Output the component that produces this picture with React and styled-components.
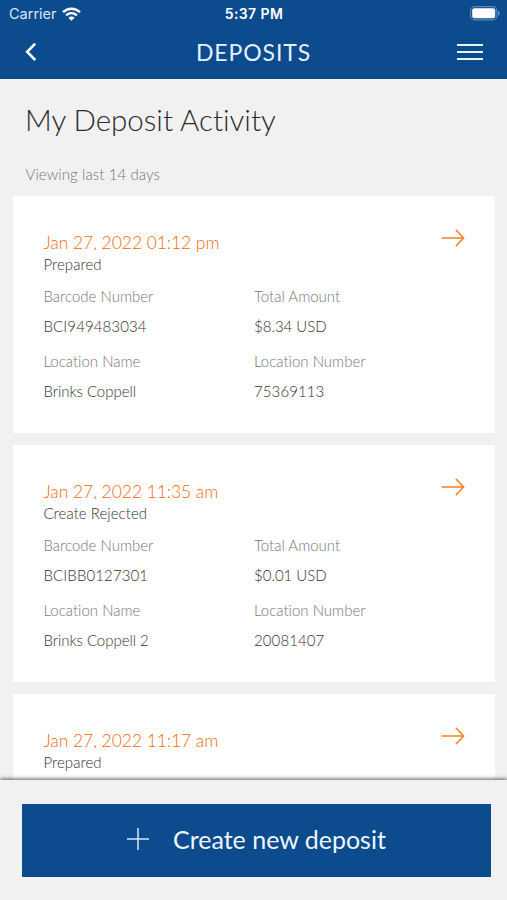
import React from "react";
import styled, { createGlobalStyle } from "styled-components";

const deposits = [
  {
    id: 1,
    date: "Jan 27, 2022 01:12 pm",
    status: "Prepared",
    barcode: "BCI949483034",
    amount: "$8.34 USD",
    location: "Brinks Coppell",
    locationNumber: "75369113",
  },
  {
    id: 2,
    date: "Jan 27, 2022 11:35 am",
    status: "Create Rejected",
    barcode: "BCIBB0127301",
    amount: "$0.01 USD",
    location: "Brinks Coppell 2",
    locationNumber: "20081407",
  },
  {
    id: 3,
    date: "Jan 27, 2022 11:17 am",
    status: "Prepared",
  },
];

function WifiIcon() {
  return (
    <svg width="19" height="14" viewBox="0 0 19 14">
      <g fill="none" stroke="#fff" strokeWidth="2.4">
        <path d="M1 5.2C5.9 0.5 13.1 0.5 18 5.2" />
        <path d="M4.1 8.4C7.3 5.5 11.7 5.5 14.9 8.4" />
      </g>
      <path d="M6.3 10.7C8.2 9.1 10.8 9.1 12.7 10.7L9.5 13.8Z" fill="#fff" />
    </svg>
  );
}

function BatteryIcon() {
  return (
    <svg width="30" height="15" viewBox="0 0 30 15">
      <rect x="0.6" y="0.6" width="26.3" height="13.3" rx="4" fill="none" stroke="#6388b5" strokeWidth="1.1" />
      <rect x="2.2" y="2.3" width="23" height="10" rx="2" fill="#fff" />
      <path d="M28.2 4.8C30 5.6 30 8.9 28.2 9.7Z" fill="#7f9fc6" />
    </svg>
  );
}

function BackIcon() {
  return (
    <svg width="12" height="20" viewBox="0 0 12 20">
      <path d="M10.2 1.6L2.2 9.8L10.2 18" fill="none" stroke="#fff" strokeWidth="2.6" />
    </svg>
  );
}

function MenuIcon() {
  return (
    <svg width="26" height="16" viewBox="0 0 26 16">
      <path d="M0 1H26M0 8H26M0 15H26" stroke="#e9f3ff" strokeWidth="2" />
    </svg>
  );
}

function ArrowIcon() {
  return (
    <svg width="24" height="18" viewBox="0 0 24 18">
      <path d="M0.5 9H22.5M14.8 0.8L22.6 9L14.8 17.2" fill="none" stroke="#f5802a" strokeWidth="1.6" />
    </svg>
  );
}

function PlusIcon() {
  return (
    <svg width="22" height="22" viewBox="0 0 22 22">
      <path d="M11 0V22M0 11H22" stroke="#d5e6f8" strokeWidth="1.5" />
    </svg>
  );
}

function Deposit({ deposit }) {
  return (
    <Card>
      <CardHeader>
        <div>
          <DepositDate>{deposit.date}</DepositDate>
          <Status>{deposit.status}</Status>
        </div>
        <ArrowIcon />
      </CardHeader>
      {deposit.barcode && (
        <Details>
          <Field>
            <Label>Barcode Number</Label>
            <Value $spacing="0.1px">{deposit.barcode}</Value>
          </Field>
          <Field>
            <Label>Total Amount</Label>
            <Value>{deposit.amount}</Value>
          </Field>
          <Field>
            <Label>Location Name</Label>
            <Value $spacing="-0.05px">{deposit.location}</Value>
          </Field>
          <Field>
            <Label>Location Number</Label>
            <Value $spacing="0.1px">{deposit.locationNumber}</Value>
          </Field>
        </Details>
      )}
    </Card>
  );
}

function App() {
  return (
    <Screen>
      <GlobalStyle />
      <StatusBar>
        <Carrier>
          Carrier <WifiIcon />
        </Carrier>
        <Time>5:37 PM</Time>
        <Battery>
          <BatteryIcon />
        </Battery>
      </StatusBar>
      <NavBar>
        <BackIcon />
        <NavTitle>DEPOSITS</NavTitle>
        <MenuIcon />
      </NavBar>
      <Content>
        <Title>My Deposit Activity</Title>
        <Subtitle>Viewing last 14 days</Subtitle>
        <List>
          {deposits.map((deposit) => (
            <Deposit key={deposit.id} deposit={deposit} />
          ))}
        </List>
      </Content>
      <Footer>
        <CreateButton>
          <PlusIcon />
          Create new deposit
        </CreateButton>
      </Footer>
    </Screen>
  );
}

const GlobalStyle = createGlobalStyle`
  * {
    box-sizing: border-box;
  }
  body {
    margin: 0;
    overflow: hidden;
  }
  svg {
    display: block;
    flex-shrink: 0;
  }
`;

const Screen = styled.div`
  display: flex;
  flex-direction: column;
  width: 507px;
  height: 900px;
  background: #f1f1f1;
  color: #333;
  font-family: Lato, sans-serif;
  font-variant-ligatures: none;
  white-space: nowrap;
`;

const StatusBar = styled.div`
  display: grid;
  grid-template-columns: 1fr auto 1fr;
  align-items: center;
  height: 27px;
  padding: 0 7px 0 9px;
  background: #0b4b8e;
  color: #fff;
  font-family: Inter, sans-serif;
`;

const Carrier = styled.div`
  display: flex;
  align-items: center;
  gap: 5px;
  color: #d9e7f6;
  font-size: 14.5px;
`;

const Time = styled.div`
  padding-right: 1px;
  font-size: 14px;
  font-weight: 600;
  letter-spacing: 0.4px;
`;

const Battery = styled.div`
  display: flex;
  justify-content: flex-end;
`;

const NavBar = styled.div`
  display: flex;
  align-items: center;
  justify-content: space-between;
  height: 52px;
  padding: 0 24px 2px 25px;
  background: #0b4b8e;
`;

const NavTitle = styled.div`
  padding-left: 13px;
  color: #e6f1ff;
  font-size: 23px;
  letter-spacing: 0.9px;
`;

const Content = styled.main`
  flex: 1;
  min-height: 0;
  overflow: hidden;
`;

const Title = styled.h1`
  margin: 21px 0 0 25px;
  font-size: 29.5px;
  font-weight: 300;
  line-height: 40px;
  color: #2b2b2b;
`;

const Subtitle = styled.div`
  margin: 24px 0 0 25.5px;
  font-size: 15px;
  font-weight: 300;
  line-height: 20px;
  letter-spacing: 0.1px;
  color: #777;
`;

const List = styled.div`
  display: flex;
  flex-direction: column;
  gap: 12px;
  padding: 12px 12px 0 13px;
`;

const Card = styled.article`
  flex-shrink: 0;
  height: 237px;
  padding: 35px 30px 0 30.5px;
  background: #fff;
`;

const CardHeader = styled.div`
  display: flex;
  justify-content: space-between;
  height: 55px;

  svg {
    margin-top: -2px;
  }
`;

const DepositDate = styled.div`
  font-size: 17.5px;
  font-weight: 300;
  line-height: 24px;
  letter-spacing: -0.06px;
  color: #f56a0c;
`;

const Status = styled.div`
  margin-top: -1px;
  font-size: 15px;
  font-weight: 300;
  line-height: 20px;
  letter-spacing: 0.05px;
`;

const Details = styled.div`
  display: grid;
  grid-template-columns: 210.5px 1fr;
  row-gap: 15px;
`;

const Field = styled.div`
  display: flex;
  flex-direction: column;
  gap: 10px;
  font-size: 15px;
  font-weight: 300;
  line-height: 20px;
`;

const Label = styled.div`
  color: #777;
`;

const Value = styled.div`
  color: #333;
  letter-spacing: ${(props) => props.$spacing || "0"};
`;

const Footer = styled.footer`
  position: relative;
  height: 120px;
  padding: 23.5px 16px 0 22px;
  background: #f1f1f1;
  box-shadow: 0 -1px 4px rgba(0, 0, 0, 0.65);
`;

const CreateButton = styled.button`
  display: flex;
  align-items: center;
  gap: 24.5px;
  width: 100%;
  height: 73px;
  padding: 0 0 2px 104.5px;
  border: 0;
  background: #0b4b8e;
  color: #eef6ff;
  font-family: inherit;
  font-size: 25px;
`;

export default App;
